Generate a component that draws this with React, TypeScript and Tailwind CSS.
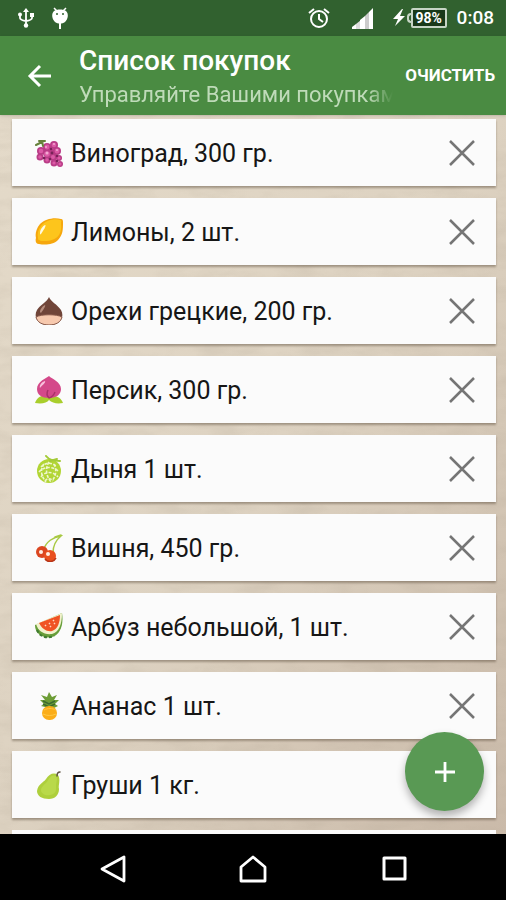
import type { ReactNode } from 'react';

const Grapes = () => (
  <>
    <g fill="#b93c86">
      <circle cx="12" cy="8" r="4" /><circle cx="19" cy="6" r="4" /><circle cx="6" cy="12" r="4" />
      <circle cx="22" cy="12" r="4" /><circle cx="5" cy="18" r="3.5" /><circle cx="18" cy="18" r="4" />
      <circle cx="24" cy="19" r="3" /><circle cx="12" cy="21" r="3.5" /><circle cx="19" cy="24" r="3.5" />
      <circle cx="25" cy="25" r="3" /><circle cx="14" cy="14" r="6" />
    </g>
    <g fill="#782258">
      <circle cx="9" cy="19" r="1.3" /><circle cx="17" cy="14" r="1.4" /><circle cx="15" cy="20" r="1.3" />
      <circle cx="22" cy="17" r="1.3" /><circle cx="22" cy="22" r="1.3" /><circle cx="16" cy="10" r="1.2" />
    </g>
    <g fill="#dc5aa6">
      <circle cx="12" cy="8" r="2.4" /><circle cx="19" cy="6" r="2.3" /><circle cx="6" cy="12" r="2.3" />
      <circle cx="22" cy="12" r="2.4" /><circle cx="12" cy="15" r="2.8" /><circle cx="5" cy="18" r="1.8" />
      <circle cx="18" cy="18" r="2" /><circle cx="12" cy="21" r="1.7" /><circle cx="19" cy="24" r="1.6" />
      <circle cx="24" cy="19" r="1.6" /><circle cx="25" cy="25" r="1.5" />
    </g>
    <g fill="#f3a9d2"><circle cx="12" cy="14" r="1.5" /><circle cx="19" cy="5" r="1" /><circle cx="11" cy="8" r="1" /><circle cx="22" cy="11" r="1" /></g>
    <path d="M1 6 9 2M4 2l6 0M7 2l1 5" fill="none" stroke="#66813a" strokeWidth="2" strokeLinecap="round" />
  </>
);

const Lemon = () => (
  <>
    <path d="M26 1C19-1 10 1 5 6 1 11 0 16 1 20c-1 3 0 6 3 6 6 1 14 1 19-4 5-5 5-11 5-17 0-2 0-4-2-4Z" fill="#f6a70d" />
    <path d="M25 2C19 0 10 3 6 8 3 12 2 16 3 20c0 3 2 3 6 3 7 0 12-2 15-6 3-5 2-9 2-13 1-1 0-2-1-2Z" fill="#fdc51c" />
    <path d="M5 15c0-4 3-7 5-8 2 0-2 6-4 9-1 1-1 0-1-1Z" fill="#fffbe4" />
  </>
);

const Chestnut = () => (
  <>
    <path d="M14 0c2 5 8 7 12 13 4 7-1 15-12 15S-2 20 2 13C5 8 12 5 14 0Z" fill="#704539" />
    <path d="M1 20c5-3 21-3 26 0-1 5-6 8-13 8S2 25 1 20Z" fill="#f7c9ae" />
    <path d="M1 20c5-3 21-3 26 0-1 5-6 8-13 8S2 25 1 20Z" fill="none" stroke="#87594a" />
    <path d="M5 15c0-3 3-6 5-7 1 1-2 5-4 8Z" fill="#b68d7d" />
  </>
);

const Peach = () => (
  <>
    <path d="M13 22C10 18 3 19 0 27c7 1 12 0 14-3 3 3 8 4 14 3-2-6-9-9-13-5Z" fill="#a9ce2c" />
    <path d="M14 0C12 2 2 5 2 13c0 6 5 9 12 9 8 0 12-4 12-9C26 6 17 3 14 0Z" fill="#d4498a" />
    <path d="M13 14c-2 4-1 6 1 8 3-1 5-3 6-6" fill="none" stroke="#a93269" strokeWidth="1.5" />
    <path d="M5 12c-1-3 2-6 5-7 1 2-3 4-5 7Z" fill="#f9c1dd" />
  </>
);

const Melon = () => (
  <>
    <circle cx="14" cy="16" r="12" fill="#b2d535" />
    <g stroke="#eef6cf" strokeWidth="1.6" fill="none" strokeDasharray="3 1.5">
      <path d="M6 12c5-5 11-5 16 0M4 17c5-6 15-6 20 0M6 22c4-6 12-6 17 0M10 26c2-3 6-3 8 0" />
      <path d="M9 9c-4 6-3 12 2 18M14 7c-4 6-3 14 2 20M19 9c3 6 2 12-2 17" />
    </g>
    <path d="M11 1c3 4 8 5 14 5M15 6l7-2" stroke="#a4cb38" strokeWidth="2" fill="none" strokeLinecap="round" />
  </>
);

const Cherry = () => (
  <>
    <path d="M9 15C11 8 18 3 26 2c-5 4-8 10-8 17M20 3l6-2" fill="none" stroke="#a8c943" strokeWidth="1.5" strokeLinecap="round" />
    <circle cx="7" cy="18" r="6" fill="#db4620" /><circle cx="15" cy="22" r="6" fill="#e9501f" />
    <path d="M10 25c3 4 9 3 11-1" stroke="#b73518" strokeWidth="1.5" fill="none" />
    <circle cx="6" cy="18" r="2" fill="#fff0e4" /><circle cx="13" cy="20" r="2" fill="#fff0e4" />
  </>
);

const Watermelon = () => (
  <>
    <path d="M0 12c0 9 8 14 17 12 8-2 12-12 10-24Z" fill="#679e3a" />
    <path d="M2 17c3 7 10 9 17 6" stroke="#3f7b31" strokeWidth="2" strokeDasharray="3 2" fill="none" />
    <path d="M1 11c2 7 8 11 16 10 7-2 10-10 10-21Z" fill="#f2f2cc" />
    <path d="M4 10c3 6 8 9 13 8 6-2 8-9 8-16Z" fill="#f05324" />
    <path d="m10 12 1 1m3-3 1 1m3-4 1 1m-4 5 1 1m3-4 1 1" stroke="#ffd6be" strokeWidth="1.5" />
  </>
);

const Pineapple = () => (
  <>
    <path d="m14 16-8-2 3-2-4-4 5 0-4-5 6 2 2-5 3 5 5-2-3 5 5 0-4 4 3 2-8 4Z" fill="#6d9d36" />
    <path d="m8 9 6 3 6-3M8 12l6 3 6-3" fill="none" stroke="#3c6a30" strokeWidth="1.5" />
    <rect x="7" y="14" width="15" height="14" rx="7" fill="#fbad18" />
    <path d="M9 18c4-2 8-2 12 0M8 22c4 2 9 2 13 0" fill="none" stroke="#ffc944" strokeWidth="1" />
  </>
);

const Pear = () => (
  <>
    <path d="M23 4c-4-3-9-1-12 4-3 4-8 5-9 12 0 5 5 8 12 8 6 0 10-4 10-10-1-4 2-9-1-14Z" fill="#aecf3c" />
    <path d="M21 5c-4-2-7 2-9 6-2 2-6 5-6 8 0 4 5 6 9 5 7-1 6-6 6-9s2-8 0-10Z" fill="#b9d94a" />
    <path d="M22 5c0-2 1-4 3-4" fill="none" stroke="#5d5140" strokeWidth="1.5" strokeLinecap="round" />
  </>
);

const items: { name: string; art: ReactNode }[] = [
  { name: 'Виноград, 300 гр.', art: <Grapes /> },
  { name: 'Лимоны, 2 шт.', art: <Lemon /> },
  { name: 'Орехи грецкие, 200 гр.', art: <Chestnut /> },
  { name: 'Персик, 300 гр.', art: <Peach /> },
  { name: 'Дыня 1 шт.', art: <Melon /> },
  { name: 'Вишня, 450 гр.', art: <Cherry /> },
  { name: 'Арбуз небольшой, 1 шт.', art: <Watermelon /> },
  { name: 'Ананас 1 шт.', art: <Pineapple /> },
  { name: 'Груши 1 кг.', art: <Pear /> },
];

function StatusBar() {
  return (
    <div className="flex h-9 shrink-0 items-center bg-[#31612f] pr-3 pl-4 text-white">
      <svg className="size-5" viewBox="0 0 20 20" fill="none" stroke="currentColor" strokeWidth="1.8" aria-hidden="true">
        <path d="M10 3v14M4 7v3q0 2 6 3M16 7v3q0 2-6 3" />
        <path d="m10 0 3 4H7Z" fill="currentColor" stroke="none" />
        <circle cx="10" cy="17.5" r="2.2" fill="currentColor" stroke="none" />
        <circle cx="4" cy="6.5" r="2" fill="currentColor" stroke="none" />
        <path d="M14 5h4v4h-4Z" fill="currentColor" stroke="none" />
      </svg>
      <svg className="ml-3.5 h-6 w-5" viewBox="0 0 20 24" aria-hidden="true">
        <path d="m4 2 3 3m9-3-3 3" stroke="white" strokeWidth="1.5" />
        <path d="M4 5c3-2 9-2 12 0 3 3 2 8-1 11-3 2-7 2-10 0C2 13 1 8 4 5Z" fill="white" />
        <path d="M10 16v7" stroke="white" strokeWidth="2" />
        <circle cx="7" cy="8" r="1" fill="#31612f" /><circle cx="13" cy="8" r="1" fill="#31612f" />
      </svg>
      <svg className="ml-auto size-6" viewBox="0 0 24 24" fill="none" stroke="currentColor" strokeWidth="2" aria-hidden="true">
        <circle cx="12" cy="13" r="8" /><path d="M12 8v5l4 3M2 7l5-4M22 7l-5-4" />
      </svg>
      <svg className="ml-5 h-6 w-6" viewBox="0 0 24 24" aria-hidden="true">
        <path d="M1 23v-2l4-3v5Z" fill="#fff" /><path d="M5 23v-5l5-4v9Z" fill="#ddd" />
        <path d="M9 23v-9l5-4v13Z" fill="#fff" /><path d="M14 23V10l4-4v17Z" fill="#ccc" /><path d="M18 23V6l4-4v21Z" fill="#fff" />
      </svg>
      <svg className="ml-4 h-5 w-4" viewBox="0 0 16 20" fill="currentColor" aria-hidden="true">
        <path d="m11 1-9 10h5l-3 7 10-10H9l3-7Z" />
      </svg>
      <div className="flex items-center">
        <span className="h-2.5 w-1 rounded-l-sm border-2 border-r-0 border-[#c6d5c5]" />
        <span className="flex h-5 w-9 items-center justify-center rounded-xs border-2 border-[#c6d5c5] bg-[#193919] text-sm font-bold">98%</span>
      </div>
      <span className="ml-2.5 text-[19px] font-medium">0:08</span>
    </div>
  );
}

function Texture() {
  return (
    <svg className="pointer-events-none absolute inset-0 size-full opacity-20" aria-hidden="true">
      <filter id="paper">
        <feTurbulence type="fractalNoise" baseFrequency="0.025 0.07" numOctaves="4" seed="8" />
        <feColorMatrix values="0 0 0 0 0.42  0 0 0 0 0.36  0 0 0 0 0.28  1.8 0 0 0 -0.7" />
      </filter>
      <rect width="100%" height="100%" filter="url(#paper)" />
    </svg>
  );
}

export default function App() {
  return (
    <div className="flex h-screen flex-col overflow-hidden bg-black font-[Roboto,'Noto_Sans',sans-serif]">
      <StatusBar />
      <header className="z-10 flex h-[79px] shrink-0 items-center bg-[#4a8b42] pr-[11px] pl-[27px] text-white shadow-sm">
        <button type="button" aria-label="Назад" className="shrink-0">
          <svg className="size-[26px]" viewBox="0 0 26 26" fill="none" stroke="currentColor" strokeWidth="3" aria-hidden="true">
            <path d="M24 13H3M13 3 3 13l10 10" />
          </svg>
        </button>
        <div className="ml-[26px] min-w-0 flex-1 pt-1.5">
          <h1 className="text-[28px] leading-8 font-medium whitespace-nowrap">Список покупок</h1>
          <p className="overflow-hidden mask-r-from-92% text-[22px] leading-9 whitespace-nowrap text-[#bfdbb9]">Управляйте Вашими покупками</p>
        </div>
        <button type="button" className="ml-3 shrink-0 text-[17px] font-bold uppercase">Очистить</button>
      </header>

      <main className="relative min-h-0 flex-1 overflow-hidden bg-linear-to-br from-[#e4dac9] via-[#ddd2c1] to-[#cabaa9]">
        <Texture />
        <ul className="relative flex flex-col gap-3 pt-1 pr-2.5 pl-3">
          {items.map((item) => (
            <li key={item.name} className="flex h-[67px] shrink-0 items-center bg-[#fbfbfb] pr-[21px] pl-[23px] shadow-[0_2px_2px_rgba(70,55,40,0.4)]">
              <svg className="size-7 shrink-0" viewBox="0 0 28 28" aria-hidden="true">{item.art}</svg>
              <span className="ml-2 flex-1 pt-0.5 text-[25px] whitespace-nowrap text-[#161616]">{item.name}</span>
              <button type="button" aria-label={`Удалить: ${item.name}`} className="shrink-0 text-[#757575]">
                <svg className="size-[26px]" viewBox="0 0 26 26" fill="none" stroke="currentColor" strokeWidth="2.5" aria-hidden="true">
                  <path d="m1 1 24 24M25 1 1 25" />
                </svg>
              </button>
            </li>
          ))}
          <li className="h-[67px] shrink-0 bg-[#fbfbfb]" />
        </ul>
        <button type="button" aria-label="Добавить" className="absolute right-[22px] bottom-[23px] flex size-[79px] items-center justify-center rounded-full bg-[#599954] text-white shadow-[0_5px_8px_rgba(0,0,0,0.3)]">
          <svg className="size-5" viewBox="0 0 20 20" stroke="currentColor" strokeWidth="2.8" aria-hidden="true">
            <path d="M10 0v20M0 10h20" />
          </svg>
        </button>
      </main>

      <nav className="grid h-[66px] shrink-0 grid-cols-3 items-center bg-black px-[41px] pt-1 text-white">
        <button type="button" aria-label="Назад" className="flex justify-center">
          <svg className="size-7" viewBox="0 0 28 28" fill="none" stroke="currentColor" strokeWidth="2.8" strokeLinejoin="round" aria-hidden="true"><path d="M26 2v24L4 14Z" /></svg>
        </button>
        <button type="button" aria-label="Домой" className="flex justify-center">
          <svg className="size-7" viewBox="0 0 28 28" fill="none" stroke="currentColor" strokeWidth="2.8" strokeLinejoin="round" aria-hidden="true"><path d="M2 26V12L14 2l12 10v14Z" /></svg>
        </button>
        <button type="button" aria-label="Недавние" className="flex justify-center">
          <svg className="size-7" viewBox="0 0 28 28" fill="none" stroke="currentColor" strokeWidth="3" strokeLinejoin="round" aria-hidden="true"><path d="M4 3h21v21H4Z" /></svg>
        </button>
      </nav>
    </div>
  );
}
